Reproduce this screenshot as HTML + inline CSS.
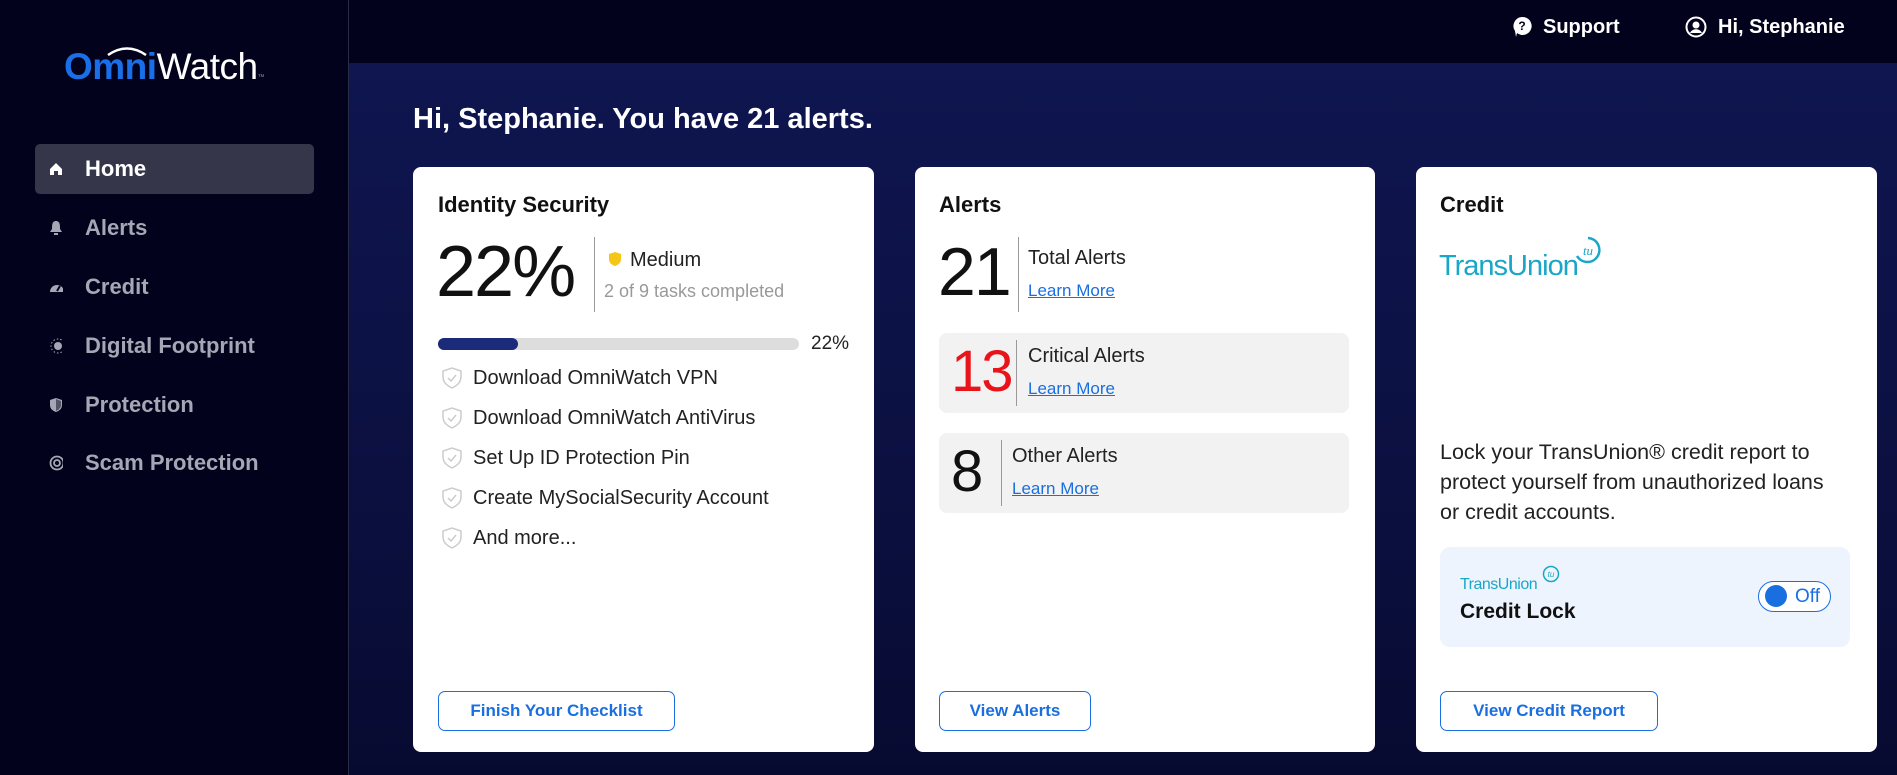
<!DOCTYPE html>
<html><head><meta charset="utf-8"><style>
*{box-sizing:border-box;margin:0;padding:0}
body{width:1897px;height:775px;overflow:hidden;font-family:"Liberation Sans",sans-serif;background:#02021a;position:relative}
.side{position:absolute;left:0;top:0;width:349px;height:775px;background:#02021c;border-right:1px solid #2a2c45}
.top{position:absolute;left:349px;top:0;right:0;height:63px;background:#02021c}
.main{position:absolute;left:349px;top:63px;right:0;bottom:0;background:linear-gradient(180deg,#0f1650 0%,#0b1040 60%,#070a30 100%)}
.abs{position:absolute}
.nav{position:absolute;left:35px;width:279px;height:50px;display:flex;align-items:center;color:#a6a7b5;font-weight:bold;font-size:22px}
.nav .ic{width:14px;margin:0 22px 0 14px;display:flex;justify-content:center}
.card{position:absolute;top:167px;height:585px;background:#fff;border-radius:8px}
.ttl{position:absolute;top:192px;font-size:22px;font-weight:bold;color:#111}
.btn{position:absolute;top:691px;height:40px;border:1.5px solid #1a6fe0;border-radius:7px;color:#1a6fe0;font-weight:bold;font-size:17px;display:flex;align-items:center;justify-content:center;background:#fff}
.item{position:absolute;left:441px;font-size:20px;color:#222;display:flex;align-items:center}
.item svg{margin-right:10px}
a{color:#1a6fe0;text-decoration:underline;font-size:17px}
.box{position:absolute;left:939px;width:410px;height:80px;background:#f2f2f2;border-radius:8px}
</style></head><body>
<div class="side">
 <div class="abs" style="left:64px;top:46px;font-size:37px;letter-spacing:-0.5px"><span style="color:#1a6fe8;font-weight:bold">Omni</span><span style="color:#fff">Watch</span><span style="color:#888;font-size:7px">™</span></div>
 <svg class="abs" style="left:106px;top:46px" width="42" height="10"><path d="M2 9 Q21 -4 40 9" stroke="#fff" stroke-width="2.5" fill="none"/></svg>
 <div class="nav" style="top:144px;background:#35364a;border-radius:5px;color:#fff"><span class="ic"><svg width="14" height="14"><path d="M1 7 L7 1 L13 7 V13 H9 V9 H5 V13 H1Z" fill="#fff"/></svg></span>Home</div>
 <div class="nav" style="top:203px"><span class="ic"><svg width="14" height="16"><path d="M7 1 C3 1 3 5 3 9 L1 12 H13 L11 9 C11 5 11 1 7 1Z M5 13 H9 V15 H5Z" fill="#a6a7b5"/></svg></span>Alerts</div>
 <div class="nav" style="top:262px"><span class="ic"><svg width="16" height="12"><path d="M1 11 A7 7 0 0 1 15 11Z" fill="#a6a7b5"/><path d="M8 10 L11 5" stroke="#02021c" stroke-width="2"/></svg></span>Credit</div>
 <div class="nav" style="top:321px"><span class="ic"><svg width="18" height="18"><circle cx="9" cy="9" r="7" stroke="#a6a7b5" stroke-dasharray="1.5 2" fill="none"/><circle cx="9" cy="9" r="4" fill="#a6a7b5"/></svg></span>Digital Footprint</div>
 <div class="nav" style="top:380px"><span class="ic"><svg width="14" height="16"><path d="M7 1 L13 3 V8 C13 12 10 14 7 15 C4 14 1 12 1 8 V3Z" fill="#a6a7b5"/><path d="M7 2 V14 C9 13 12 11 12 8 V4Z" fill="#02021c" opacity=".5"/></svg></span>Protection</div>
 <div class="nav" style="top:438px"><span class="ic"><svg width="16" height="16"><circle cx="8" cy="8" r="6.5" stroke="#a6a7b5" stroke-width="1.8" fill="none"/><circle cx="8" cy="8" r="3" stroke="#a6a7b5" stroke-width="1.8" fill="none"/></svg></span>Scam Protection</div>
</div>
<div class="top">
 <svg class="abs" style="left:1163px;top:16px" width="20" height="22"><path d="M10 1 A9 9 0 1 1 5 17 L4 21 L3 15 A9 9 0 0 1 10 1Z" fill="#fff"/><text x="10" y="14" font-size="12" font-weight="bold" text-anchor="middle" fill="#02021c" font-family="Liberation Sans">?</text></svg>
 <div class="abs" style="left:1194px;top:16px;color:#fff;font-weight:bold;font-size:20px">Support</div>
 <svg class="abs" style="left:1336px;top:16px" width="22" height="22"><circle cx="11" cy="11" r="9.5" stroke="#fff" stroke-width="2" fill="none"/><circle cx="11" cy="9" r="3.5" fill="#fff"/><path d="M5 17 C7 12 15 12 17 17" fill="#fff"/></svg>
 <div class="abs" style="left:1369px;top:16px;color:#fff;font-weight:bold;font-size:20px">Hi, Stephanie</div>
</div>
<div class="main"></div>
<div class="abs" style="left:413px;top:103px;color:#fff;font-weight:bold;font-size:29px">Hi, Stephanie. You have 21 alerts.</div>

<div class="card" style="left:413px;width:461px"></div>
<div class="ttl" style="left:438px">Identity Security</div>
<div class="abs" style="left:436px;top:231px;font-size:72px;color:#111;letter-spacing:-2px">22%</div>
<div class="abs" style="left:594px;top:237px;width:1px;height:75px;background:#999"></div>
<svg class="abs" style="left:608px;top:251px" width="14" height="16"><path d="M7 1 L13 3 V8 C13 12 10 14 7 15 C4 14 1 12 1 8 V3Z" fill="#f5c518"/></svg>
<div class="abs" style="left:630px;top:249px;font-size:20px;color:#222">Medium</div>
<div class="abs" style="left:604px;top:281px;font-size:18px;color:#999">2 of 9 tasks completed</div>
<div class="abs" style="left:438px;top:338px;width:361px;height:12px;background:#ddd;border-radius:6px"><div style="width:80px;height:12px;background:#1c2a7a;border-radius:6px"></div></div>
<div class="abs" style="left:811px;top:333px;font-size:19px;color:#222">22%</div>
<div class="item" style="top:366px"><svg width="22" height="24"><path d="M11 2 L20 5 V11 C20 17 15 20 11 22 C7 20 2 17 2 11 V5Z" fill="none" stroke="#ccc" stroke-width="1.5"/><path d="M7 12 L10 15 L15 9" fill="none" stroke="#ccc" stroke-width="1.5"/></svg>Download OmniWatch VPN</div>
<div class="item" style="top:406px"><svg width="22" height="24"><path d="M11 2 L20 5 V11 C20 17 15 20 11 22 C7 20 2 17 2 11 V5Z" fill="none" stroke="#ccc" stroke-width="1.5"/><path d="M7 12 L10 15 L15 9" fill="none" stroke="#ccc" stroke-width="1.5"/></svg>Download OmniWatch AntiVirus</div>
<div class="item" style="top:446px"><svg width="22" height="24"><path d="M11 2 L20 5 V11 C20 17 15 20 11 22 C7 20 2 17 2 11 V5Z" fill="none" stroke="#ccc" stroke-width="1.5"/><path d="M7 12 L10 15 L15 9" fill="none" stroke="#ccc" stroke-width="1.5"/></svg>Set Up ID Protection Pin</div>
<div class="item" style="top:486px"><svg width="22" height="24"><path d="M11 2 L20 5 V11 C20 17 15 20 11 22 C7 20 2 17 2 11 V5Z" fill="none" stroke="#ccc" stroke-width="1.5"/><path d="M7 12 L10 15 L15 9" fill="none" stroke="#ccc" stroke-width="1.5"/></svg>Create MySocialSecurity Account</div>
<div class="item" style="top:526px"><svg width="22" height="24"><path d="M11 2 L20 5 V11 C20 17 15 20 11 22 C7 20 2 17 2 11 V5Z" fill="none" stroke="#ccc" stroke-width="1.5"/><path d="M7 12 L10 15 L15 9" fill="none" stroke="#ccc" stroke-width="1.5"/></svg>And more...</div>
<div class="btn" style="left:438px;width:237px">Finish Your Checklist</div>

<div class="card" style="left:915px;width:460px"></div>
<div class="ttl" style="left:939px">Alerts</div>
<div class="abs" style="left:938px;top:233px;font-size:68px;color:#111;letter-spacing:-2px">21</div>
<div class="abs" style="left:1018px;top:237px;width:1px;height:75px;background:#999"></div>
<div class="abs" style="left:1028px;top:247px;font-size:20px;color:#222">Total Alerts</div>
<div class="abs" style="left:1028px;top:281px"><a>Learn More</a></div>
<div class="box" style="top:333px"></div>
<div class="abs" style="left:951px;top:338px;font-size:58px;color:#e8141a;letter-spacing:-2px">13</div>
<div class="abs" style="left:1016px;top:340px;width:1px;height:66px;background:#999"></div>
<div class="abs" style="left:1028px;top:345px;font-size:20px;color:#222">Critical Alerts</div>
<div class="abs" style="left:1028px;top:379px"><a>Learn More</a></div>
<div class="box" style="top:433px"></div>
<div class="abs" style="left:951px;top:438px;font-size:58px;color:#111">8</div>
<div class="abs" style="left:1001px;top:440px;width:1px;height:66px;background:#999"></div>
<div class="abs" style="left:1012px;top:445px;font-size:20px;color:#222">Other Alerts</div>
<div class="abs" style="left:1012px;top:479px"><a>Learn More</a></div>
<div class="btn" style="left:939px;width:152px">View Alerts</div>

<div class="card" style="left:1416px;width:461px"></div>
<div class="ttl" style="left:1440px">Credit</div>
<div class="abs" style="left:1439px;top:250px;font-size:29px;color:#1aa6c8;letter-spacing:-1px">TransUnion</div>
<svg class="abs" style="left:1573px;top:236px" width="30" height="30"><path d="M15 2 A12 12 0 1 1 4 20" stroke="#1aa6c8" stroke-width="2.5" fill="none"/><text x="15" y="19" font-size="13" font-style="italic" text-anchor="middle" fill="#1aa6c8" font-family="Liberation Serif">tu</text></svg>
<div class="abs" style="left:1440px;top:437px;width:400px;font-size:21.5px;line-height:30px;color:#222">Lock your TransUnion® credit report to protect yourself from unauthorized loans or credit accounts.</div>
<div class="abs" style="left:1440px;top:547px;width:410px;height:100px;background:#edf4fd;border-radius:10px"></div>
<div class="abs" style="left:1460px;top:576px;font-size:16px;color:#1aa6c8;letter-spacing:-0.5px">TransUnion</div>
<svg class="abs" style="left:1542px;top:565px" width="18" height="18"><circle cx="9" cy="9" r="7.5" stroke="#1aa6c8" stroke-width="1.5" fill="none"/><text x="9" y="12" font-size="8" font-style="italic" text-anchor="middle" fill="#1aa6c8">tu</text></svg>
<div class="abs" style="left:1460px;top:600px;font-size:21px;font-weight:bold;color:#111">Credit Lock</div>
<div class="abs" style="left:1758px;top:581px;width:73px;height:31px;border:1.5px solid #1a6fe0;border-radius:16px;background:#fff"></div>
<div class="abs" style="left:1765px;top:585px;width:22px;height:22px;border-radius:50%;background:#1a6fe0"></div>
<div class="abs" style="left:1795px;top:586px;font-size:19px;color:#1a6fe0">Off</div>
<div class="btn" style="left:1440px;width:218px">View Credit Report</div>
</body></html>
